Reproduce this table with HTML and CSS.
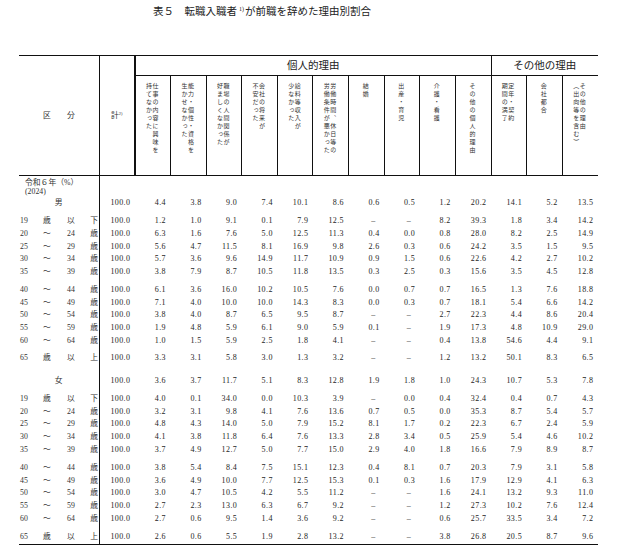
FILE: index.html
```html
<!DOCTYPE html>
<html lang="ja">
<head>
<meta charset="utf-8">
<title>表５ 転職入職者が前職を辞めた理由別割合</title>
<link rel="stylesheet" href="styles.css">
</head>
<body>
<h1 class="title">表５　転職入職者<sup>1)</sup>が前職を辞めた理由別割合</h1>
<table class="tbl">
<colgroup>
<col class="c-lbl"><col class="c-kei">
<col class="c-d"><col class="c-d"><col class="c-d"><col class="c-d"><col class="c-d"><col class="c-d"><col class="c-d"><col class="c-d"><col class="c-d"><col class="c-d"><col class="c-d"><col class="c-d"><col class="c-d">
</colgroup>
<thead>
<tr class="h-grp">
<th rowspan="2" class="area"><div class="lg"><span class="p2">区</span><span class="p3">分</span></div></th>
<th rowspan="2" class="kei">計<sup>2)</sup></th>
<th colspan="10" class="grp grp1">個人的理由</th>
<th colspan="3" class="grp">その他の理由</th>
</tr>
<tr class="h-sub">
<th><div class="v">仕事の内容に興味を<br>持てなかった</div></th>
<th><div class="v">能力・個性・資格を<br>生かせなかった</div></th>
<th><div class="v">職場の人間関係が<br>好ましくなかった</div></th>
<th><div class="v">会社の将来が<br>不安だった</div></th>
<th><div class="v">給料等収入が<br>少なかった</div></th>
<th><div class="v">労働時間、休日等の<br>労働条件が悪かった</div></th>
<th><div class="v">結婚</div></th>
<th><div class="v">出産・育児</div></th>
<th><div class="v">介護・看護</div></th>
<th><div class="v">その他の個人的理由</div></th>
<th><div class="v">定年・契約<br>期間の満了</div></th>
<th><div class="v">会社都合</div></th>
<th><div class="v">その他の理由<br>（出向等を含む）</div></th>
</tr>
</thead>
<tbody>
<tr class="era"><td class="lbl era-lbl">令和６年（%）<br>(2024)</td><td colspan="14"></td></tr>

<tr><td class="lbl sex">男</td><td>100.0</td><td>4.4</td><td>3.8</td><td>9.0</td><td>7.4</td><td>10.1</td><td>8.6</td><td>0.6</td><td>0.5</td><td>1.2</td><td>20.2</td><td>14.1</td><td>5.2</td><td>13.5</td></tr>

<tr class="gap-a"><td class="lbl"><div class="lg"><span class="p1">19</span><span class="p2">歳</span><span class="p3">以</span><span class="p4">下</span></div></td><td>100.0</td><td>1.2</td><td>1.0</td><td>9.1</td><td>0.1</td><td>7.9</td><td>12.5</td><td class="nil">–</td><td class="nil">–</td><td>8.2</td><td>39.3</td><td>1.8</td><td>3.4</td><td>14.2</td></tr>
<tr><td class="lbl"><div class="lg"><span class="p1">20</span><span class="p2">～</span><span class="p3">24</span><span class="p4">歳</span></div></td><td>100.0</td><td>6.3</td><td>1.6</td><td>7.6</td><td>5.0</td><td>12.5</td><td>11.3</td><td>0.4</td><td>0.0</td><td>0.8</td><td>28.0</td><td>8.2</td><td>2.5</td><td>14.9</td></tr>
<tr><td class="lbl"><div class="lg"><span class="p1">25</span><span class="p2">～</span><span class="p3">29</span><span class="p4">歳</span></div></td><td>100.0</td><td>5.6</td><td>4.7</td><td>11.5</td><td>8.1</td><td>16.9</td><td>9.8</td><td>2.6</td><td>0.3</td><td>0.6</td><td>24.2</td><td>3.5</td><td>1.5</td><td>9.5</td></tr>
<tr><td class="lbl"><div class="lg"><span class="p1">30</span><span class="p2">～</span><span class="p3">34</span><span class="p4">歳</span></div></td><td>100.0</td><td>5.7</td><td>3.6</td><td>9.6</td><td>14.9</td><td>11.7</td><td>10.9</td><td>0.9</td><td>1.5</td><td>0.6</td><td>22.6</td><td>4.2</td><td>2.7</td><td>10.2</td></tr>
<tr><td class="lbl"><div class="lg"><span class="p1">35</span><span class="p2">～</span><span class="p3">39</span><span class="p4">歳</span></div></td><td>100.0</td><td>3.8</td><td>7.9</td><td>8.7</td><td>10.5</td><td>11.8</td><td>13.5</td><td>0.3</td><td>2.5</td><td>0.3</td><td>15.6</td><td>3.5</td><td>4.5</td><td>12.8</td></tr>

<tr class="gap-b"><td class="lbl"><div class="lg"><span class="p1">40</span><span class="p2">～</span><span class="p3">44</span><span class="p4">歳</span></div></td><td>100.0</td><td>6.1</td><td>3.6</td><td>16.0</td><td>10.2</td><td>10.5</td><td>7.6</td><td>0.0</td><td>0.7</td><td>0.7</td><td>16.5</td><td>1.3</td><td>7.6</td><td>18.8</td></tr>
<tr><td class="lbl"><div class="lg"><span class="p1">45</span><span class="p2">～</span><span class="p3">49</span><span class="p4">歳</span></div></td><td>100.0</td><td>7.1</td><td>4.0</td><td>10.0</td><td>10.0</td><td>14.3</td><td>8.3</td><td>0.0</td><td>0.3</td><td>0.7</td><td>18.1</td><td>5.4</td><td>6.6</td><td>14.2</td></tr>
<tr><td class="lbl"><div class="lg"><span class="p1">50</span><span class="p2">～</span><span class="p3">54</span><span class="p4">歳</span></div></td><td>100.0</td><td>3.8</td><td>4.0</td><td>8.7</td><td>6.5</td><td>9.5</td><td>8.7</td><td class="nil">–</td><td class="nil">–</td><td>2.7</td><td>22.3</td><td>4.4</td><td>8.6</td><td>20.4</td></tr>
<tr><td class="lbl"><div class="lg"><span class="p1">55</span><span class="p2">～</span><span class="p3">59</span><span class="p4">歳</span></div></td><td>100.0</td><td>1.9</td><td>4.8</td><td>5.9</td><td>6.1</td><td>9.0</td><td>5.9</td><td>0.1</td><td class="nil">–</td><td>1.9</td><td>17.3</td><td>4.8</td><td>10.9</td><td>29.0</td></tr>
<tr><td class="lbl"><div class="lg"><span class="p1">60</span><span class="p2">～</span><span class="p3">64</span><span class="p4">歳</span></div></td><td>100.0</td><td>1.0</td><td>1.5</td><td>5.9</td><td>2.5</td><td>1.8</td><td>4.1</td><td class="nil">–</td><td class="nil">–</td><td>0.4</td><td>13.8</td><td>54.6</td><td>4.4</td><td>9.1</td></tr>

<tr class="gap-c"><td class="lbl"><div class="lg"><span class="p1">65</span><span class="p2">歳</span><span class="p3">以</span><span class="p4">上</span></div></td><td>100.0</td><td>3.3</td><td>3.1</td><td>5.8</td><td>3.0</td><td>1.3</td><td>3.2</td><td class="nil">–</td><td class="nil">–</td><td>1.2</td><td>13.2</td><td>50.1</td><td>8.3</td><td>6.5</td></tr>

<tr class="gap-d"><td class="lbl sex">女</td><td>100.0</td><td>3.6</td><td>3.7</td><td>11.7</td><td>5.1</td><td>8.3</td><td>12.8</td><td>1.9</td><td>1.8</td><td>1.0</td><td>24.3</td><td>10.7</td><td>5.3</td><td>7.8</td></tr>

<tr class="gap-a"><td class="lbl"><div class="lg"><span class="p1">19</span><span class="p2">歳</span><span class="p3">以</span><span class="p4">下</span></div></td><td>100.0</td><td>4.0</td><td>0.1</td><td>34.0</td><td>0.0</td><td>10.3</td><td>3.9</td><td class="nil">–</td><td>0.0</td><td>0.4</td><td>32.4</td><td>0.4</td><td>0.7</td><td>4.3</td></tr>
<tr><td class="lbl"><div class="lg"><span class="p1">20</span><span class="p2">～</span><span class="p3">24</span><span class="p4">歳</span></div></td><td>100.0</td><td>3.2</td><td>3.1</td><td>9.8</td><td>4.1</td><td>7.6</td><td>13.6</td><td>0.7</td><td>0.5</td><td>0.0</td><td>35.3</td><td>8.7</td><td>5.4</td><td>5.7</td></tr>
<tr><td class="lbl"><div class="lg"><span class="p1">25</span><span class="p2">～</span><span class="p3">29</span><span class="p4">歳</span></div></td><td>100.0</td><td>4.8</td><td>4.3</td><td>14.0</td><td>5.0</td><td>7.9</td><td>15.2</td><td>8.1</td><td>1.7</td><td>0.2</td><td>22.3</td><td>6.7</td><td>2.4</td><td>5.9</td></tr>
<tr><td class="lbl"><div class="lg"><span class="p1">30</span><span class="p2">～</span><span class="p3">34</span><span class="p4">歳</span></div></td><td>100.0</td><td>4.1</td><td>3.8</td><td>11.8</td><td>6.4</td><td>7.6</td><td>13.3</td><td>2.8</td><td>3.4</td><td>0.5</td><td>25.9</td><td>5.4</td><td>4.6</td><td>10.2</td></tr>
<tr><td class="lbl"><div class="lg"><span class="p1">35</span><span class="p2">～</span><span class="p3">39</span><span class="p4">歳</span></div></td><td>100.0</td><td>3.7</td><td>4.9</td><td>12.7</td><td>5.0</td><td>7.7</td><td>15.0</td><td>2.9</td><td>4.0</td><td>1.8</td><td>16.6</td><td>7.9</td><td>8.9</td><td>8.7</td></tr>

<tr class="gap-a"><td class="lbl"><div class="lg"><span class="p1">40</span><span class="p2">～</span><span class="p3">44</span><span class="p4">歳</span></div></td><td>100.0</td><td>3.8</td><td>5.4</td><td>8.4</td><td>7.5</td><td>15.1</td><td>12.3</td><td>0.4</td><td>8.1</td><td>0.7</td><td>20.3</td><td>7.9</td><td>3.1</td><td>5.8</td></tr>
<tr><td class="lbl"><div class="lg"><span class="p1">45</span><span class="p2">～</span><span class="p3">49</span><span class="p4">歳</span></div></td><td>100.0</td><td>3.6</td><td>4.9</td><td>10.0</td><td>7.7</td><td>12.5</td><td>15.3</td><td>0.1</td><td>0.3</td><td>1.6</td><td>17.9</td><td>12.9</td><td>4.1</td><td>6.3</td></tr>
<tr><td class="lbl"><div class="lg"><span class="p1">50</span><span class="p2">～</span><span class="p3">54</span><span class="p4">歳</span></div></td><td>100.0</td><td>3.0</td><td>4.7</td><td>10.5</td><td>4.2</td><td>5.5</td><td>11.2</td><td class="nil">–</td><td class="nil">–</td><td>1.6</td><td>24.1</td><td>13.2</td><td>9.3</td><td>11.0</td></tr>
<tr><td class="lbl"><div class="lg"><span class="p1">55</span><span class="p2">～</span><span class="p3">59</span><span class="p4">歳</span></div></td><td>100.0</td><td>2.7</td><td>2.3</td><td>13.0</td><td>6.3</td><td>6.7</td><td>9.2</td><td class="nil">–</td><td class="nil">–</td><td>1.2</td><td>27.3</td><td>10.2</td><td>7.6</td><td>12.4</td></tr>
<tr><td class="lbl"><div class="lg"><span class="p1">60</span><span class="p2">～</span><span class="p3">64</span><span class="p4">歳</span></div></td><td>100.0</td><td>2.7</td><td>0.6</td><td>9.5</td><td>1.4</td><td>3.6</td><td>9.2</td><td class="nil">–</td><td class="nil">–</td><td>0.6</td><td>25.7</td><td>33.5</td><td>3.4</td><td>7.2</td></tr>

<tr class="gap-e"><td class="lbl"><div class="lg"><span class="p1">65</span><span class="p2">歳</span><span class="p3">以</span><span class="p4">上</span></div></td><td>100.0</td><td>2.6</td><td>0.6</td><td>5.5</td><td>1.9</td><td>2.8</td><td>13.2</td><td class="nil">–</td><td class="nil">–</td><td>3.8</td><td>26.8</td><td>20.5</td><td>8.7</td><td>9.6</td></tr>
</tbody>
</table>
</body>
</html>
```
FILE: styles.css
```css
body {
  margin: 0;
  background: #fff;
  color: #1e1e1e;
  font-family: "Liberation Serif", "Noto Sans CJK JP", serif;
}

.title {
  margin: 0 0 36px;
  padding-top: 5px;
  width: 524px;
  text-align: center;
  font-size: 10.5px;
  line-height: 14px;
  font-weight: normal;
  color: #222;
}
.title sup {
  font-size: 6px;
  line-height: 0;
  vertical-align: 4px;
  margin: 0 1px 0 2px;
}

.tbl {
  margin-left: 19px;
  width: 579px;
  table-layout: fixed;
  border-collapse: collapse;
  border-top: 1.5px solid #111;
  border-bottom: 2px solid #111;
}
.c-lbl { width: 80px; }
.c-kei { width: 36px; }
.c-d { width: 35.6px; }

thead th {
  font-weight: normal;
  padding: 0;
  border-bottom: 1.5px solid #111;
}
.h-grp { height: 20px; }
.h-sub { height: 100px; }

th.area {
  border-right: 1.5px solid #111;
  font-size: 7.8px;
  line-height: 12px;
  color: #333;
}
th.kei {
  border-right: 2px solid #111;
  font-size: 7.8px;
  line-height: 12px;
  color: #333;
}
th.kei sup {
  font-size: 4.5px;
  line-height: 0;
  vertical-align: 3px;
}
th.grp {
  font-size: 10.5px;
  line-height: 19px;
  border-bottom: 1px solid #111;
  color: #222;
}
th.grp1 { border-right: 1.5px solid #111; }

.h-sub th {
  vertical-align: top;
  padding: 7px 3px 0 0;
  border-right: 1.5px solid #111;
}
.h-sub th:last-child { border-right: 0; }

.v {
  display: inline-block;
  writing-mode: vertical-rl;
  font-family: "Noto Sans CJK JP", sans-serif;
  font-size: 6px;
  line-height: 6.5px;
  letter-spacing: 2px;
  text-align: start;
  color: #333;
}

tbody td {
  padding: 0 4.6px 0 0;
  text-align: right;
  font-size: 8px;
  line-height: 12.7px;
  letter-spacing: 0.4px;
  white-space: nowrap;
}
tbody td.nil { padding-right: 9px; letter-spacing: 0; }

tbody td.lbl {
  padding-left: 0;
  padding-right: 0;
  text-align: left;
  letter-spacing: 0;
  font-size: 7.8px;
  color: #333;
  border-right: 1.5px solid #111;
}
tbody td.sex { text-align: center; }
tbody td.era-lbl {
  padding: 1.5px 0 1.5px 6px;
  line-height: 9px;
}

.lg {
  display: grid;
  grid-template-columns: 14px 28px 20px 17px;
  align-items: center;
}
.p1 { grid-column: 1; justify-self: start; padding-left: 1px; }
.p2 { grid-column: 2; justify-self: center; }
.p3 { grid-column: 3; justify-self: center; }
.p4 { grid-column: 4; justify-self: end; }

.gap-a > td { padding-top: 5.6px; }
.gap-b > td { padding-top: 5.1px; }
.gap-c > td { padding-top: 4.5px; }
.gap-d > td { padding-top: 10px; }
.gap-e > td { padding-top: 5.9px; }
```
